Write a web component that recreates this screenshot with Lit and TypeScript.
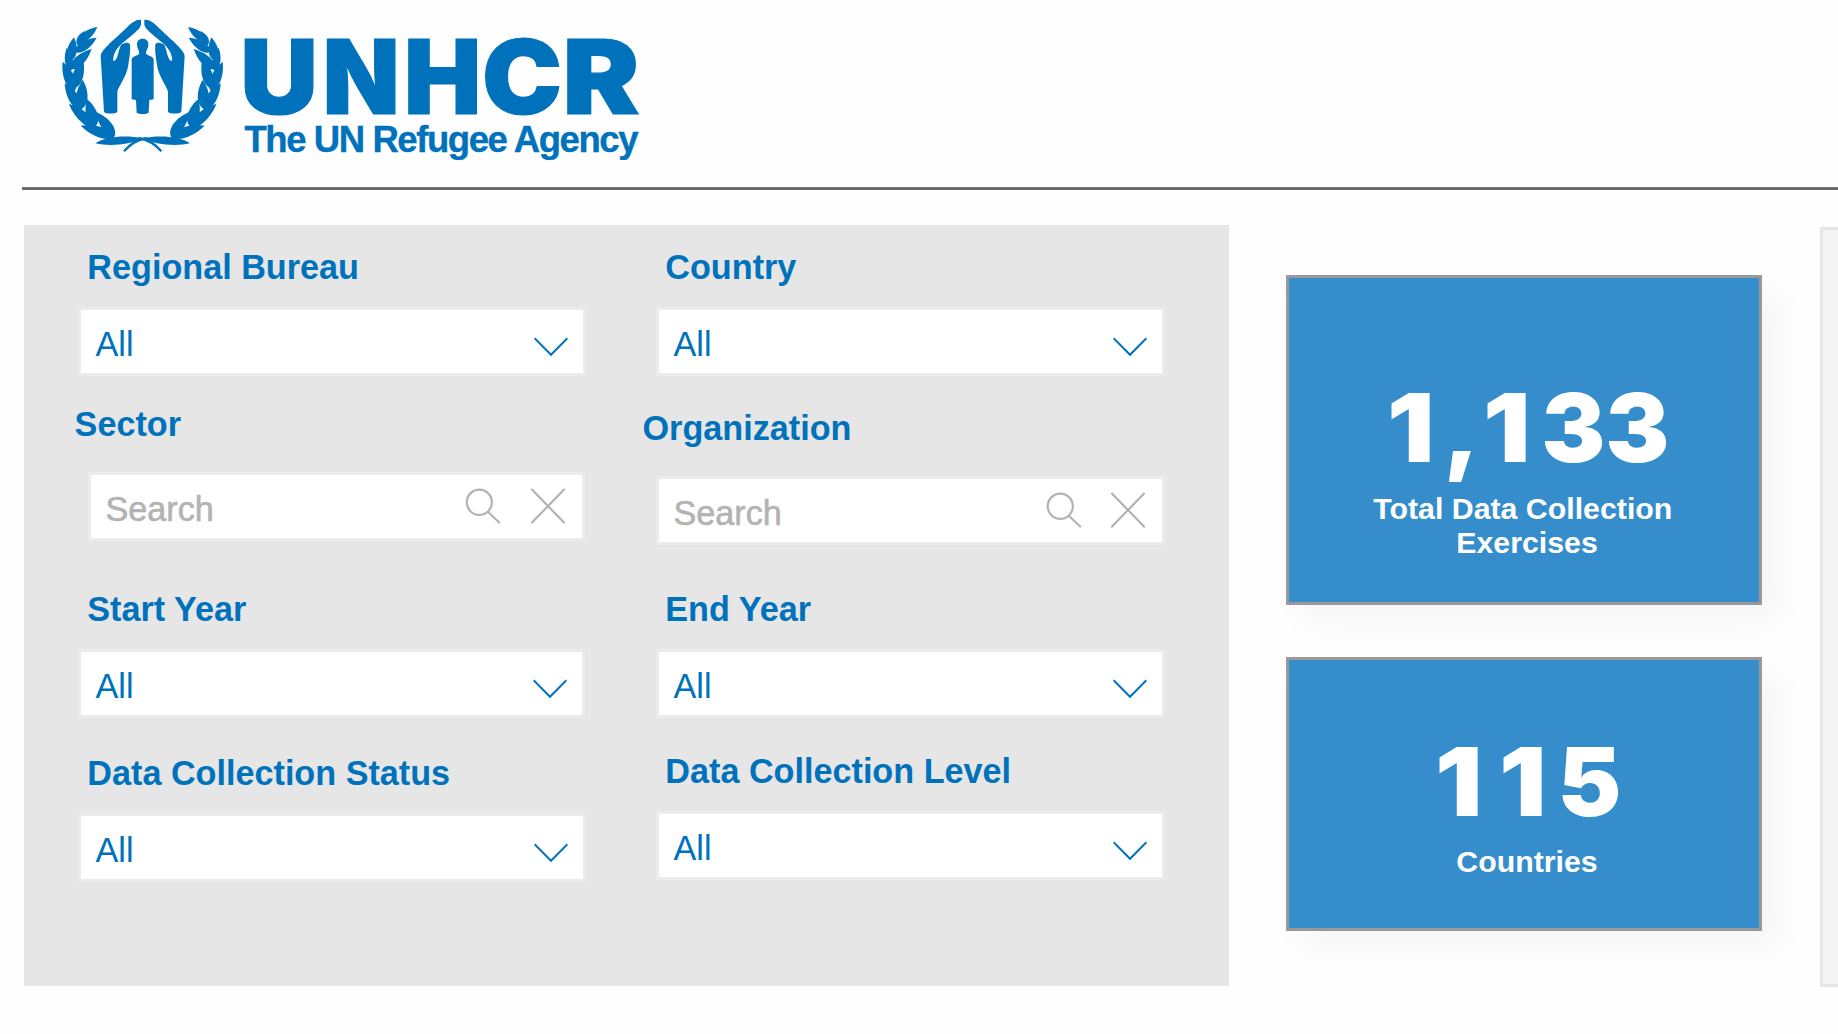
import { LitElement, html, svg, css } from "lit";
import { customElement, property } from "lit/decorators.js";
import { classMap } from "lit/directives/class-map.js";

type Leaf = [number, number, number, number, number];

// Laurel leaves: tip x/y, base x/y, half width
const LEAVES: Leaf[] = [
  [142, 51, 86, 95, 10],
  [104, 63, 83, 106, 9],
  [140, 83, 74, 126, 11],
  [72, 82, 61, 153, 12],
  [125, 117, 60, 178, 12],
  [50, 113, 62, 182, 10],
  [98, 143, 74, 234, 13],
  [38, 155, 74, 243, 13],
  [98, 209, 94, 297, 14],
  [44, 220, 94, 301, 13],
  [111, 267, 136, 350, 14],
  [57, 282, 135, 352, 13],
  [138, 306, 194, 378, 13],
  [92, 347, 194, 381, 13],
];

const leafPath = ([tx, ty, bx, by, w]: Leaf) => {
  const dx = bx - tx;
  const dy = by - ty;
  const len = Math.hypot(dx, dy);
  const nx = (-dy / len) * w * 1.7;
  const ny = (dx / len) * w * 1.7;
  const p = (t: number, s: number) =>
    `${(tx + dx * t + nx * s).toFixed(1)} ${(ty + dy * t + ny * s).toFixed(1)}`;
  return `M${tx} ${ty}C${p(0.38, 0.9)} ${p(0.84, 1)} ${bx} ${by}C${p(0.84, -1)} ${p(0.38, -0.9)} ${tx} ${ty}Z`;
};

@customElement("brand-logo")
export class BrandLogo extends LitElement {
  static styles = css`
    :host { display: block; }
    .logo { display: block; width: 600px; height: 150px; fill: #0072bc; }
    .name { font: 900 103px Inter, Arial, sans-serif; stroke: #0072bc; stroke-width: 1.2px; }
    .tag { font: 700 36.5px "Liberation Sans", Arial, sans-serif; stroke: #0072bc; stroke-width: .4px; }
    .stem { fill: none; stroke: #0072bc; stroke-width: 7; }
  `;

  render() {
    const half = svg`
      <path d="M273 30C262 27 245 37 230 53C200 82 152 120 152 138L162 306C170 312 193 312 202 306L202 245C206 228 230 200 235 165C238 145 242 120 240 103C236 96 226 97 215 103C206 115 206 135 198 148C192 157 188 152 190 143C194 120 208 106 226 92C247 74 270 58 273 44Z"/>
      ${LEAVES.map((l) => svg`<path d=${leafPath(l)}/>`)}
      <path d="M136 400C165 380 225 374 279 385C240 404 180 410 136 400Z"/>
      <path class="stem" d="M222 424C240 402 258 390 290 384"/>`;
    // Letter, x origin, horizontal stretch
    const letters: [string, number, number][] = [
      ["U", 240.2, 1.045],
      ["N", 322.8, 0.97],
      ["H", 404, 1],
      ["C", 482, 1.04],
      ["R", 562.5, 1.12],
    ];
    return html`
      <svg class="logo" viewBox="50 10 600 150" role="img" aria-label="UNHCR">
        <g transform="translate(50 10) scale(.33333)">
          ${half}
          <g transform="translate(556 0) scale(-1 1)">${half}</g>
          <path d="M278 86C290 86 296 94 295 106C294 117 288 122 288 130C290 138 311 138 311 150L311 268L298 270L296 308C290 313 266 313 260 308L258 270L245 268L245 150C245 138 266 138 268 130C268 122 262 117 261 106C260 94 266 86 278 86Z"/>
        </g>
        ${letters.map(([c, x, s]) => svg`<text class="name" transform=${`translate(${x} 113.5) scale(${s} 1)`}>${c}</text>`)}
        <text class="tag" x="244.5" y="151.5" textLength="394" lengthAdjust="spacing">The UN Refugee Agency</text>
      </svg>`;
  }
}

@customElement("filter-field")
export class FilterField extends LitElement {
  @property() label = "";
  @property() kind: "select" | "search" = "select";

  static styles = css`
    :host { display: block; color: #0072bc; font: 34.2px/40px "Liberation Sans", Arial, sans-serif; }
    .label { font-weight: 700; white-space: nowrap; margin-left: var(--label-x, 9.3px); height: 40px; }
    .box {
      box-sizing: border-box; height: 69px; display: flex; background: #fff;
      border: 3px solid #ebebeb; padding: 14px 14.6px 0 14.5px;
      margin: var(--box-gap, 20px) var(--box-end, 0) 0 var(--box-start, 0);
    }
    .value { flex: 1; }
    .chevron { width: 34px; height: 20px; margin: 12.5px 0 0; fill: none; stroke: #0072bc; stroke-width: 2; }
    .search { padding: 13px 15.6px 0 14.5px; color: #b3b3b3; }
    .search .value { -webkit-text-stroke: .6px #b3b3b3; padding-top: 1px; }
    .glass, .clear { width: 36px; height: 36px; fill: none; stroke: #b3b3b3; stroke-width: 2.2; stroke-linecap: round; }
    .glass { margin-right: var(--icon-gap, 29px); }
  `;

  render() {
    return html`
      <div class="label">${this.label}</div>
      ${this.kind === "select"
        ? html`<div class="box">
            <span class="value">All</span>
            <svg class="chevron" viewBox="0 0 34 20"><path d="M.6 1.3L17 17.8L33.4 1.3"/></svg>
          </div>`
        : html`<div class="box search">
            <span class="value">Search</span>
            <svg class="glass" viewBox="0 0 36 36"><circle cx="14.3" cy="14.3" r="12.6"/><path d="M22.8 23.8L34.2 34.5"/></svg>
            <svg class="clear" viewBox="0 0 36 36"><path d="M2 1.6L34 34.6M34 1.6L2 34.6"/></svg>
          </div>`}
    `;
  }
}

@customElement("stat-card")
export class StatCard extends LitElement {
  @property() value = "";
  @property({ type: Array }) lines: string[] = [];

  static styles = css`
    :host {
      box-sizing: border-box; display: flex; flex-direction: column; align-items: center;
      border: 3px solid #999; background: #358ecb; color: #fff; padding-left: 6px;
      box-shadow: 16px 16px 34px rgba(0, 0, 0, .04);
      font: 700 30.3px/34px "Liberation Sans", Arial, sans-serif;
    }
    .value { display: flex; padding-right: 3px; font: 900 95.5px/100px Inter, Arial, sans-serif; }
    .digit { width: 64px; display: flex; justify-content: center; }
    .one { box-sizing: border-box; padding-right: 6px; transform: scaleX(1.1); }
    .comma { width: 32px; }
    .caption { margin-top: var(--caption-gap, 0); text-align: center; }
    .line { white-space: pre; }
  `;

  render() {
    return html`
      <div class="value">
        ${[...this.value].map(
          (c) => html`<span class=${classMap({ digit: true, one: c === "1", comma: c === "," })}>${c}</span>`,
        )}
      </div>
      <div class="caption">${this.lines.map((l) => html`<div class="line">${l}</div>`)}</div>
    `;
  }
}

@customElement("app-root")
export class AppRoot extends LitElement {
  static styles = css`
    :host { display: block; width: 1838px; height: 1034px; overflow: hidden; background: #fefefe; }
    .header { height: 187px; box-sizing: border-box; padding: 10px 0 0 50px; }
    .rule { height: 2px; margin-left: 22px; background: #666; border-top: 1px solid #7a7a7a; }
    .main { display: flex; align-items: flex-start; padding: 35px 0 0 24px; }
    .filters {
      flex: none; box-sizing: border-box; width: 1205px; height: 761px; background: #e6e6e6;
      display: flex; gap: 70px; padding: 22px 0 0 54px;
    }
    .left { width: 508px; }
    .right { width: 508.5px; }
    .sector { --label-x: -3.4px; --box-gap: 28px; --box-start: 10px; --box-end: 1px; margin-top: 28px; }
    .organization { --label-x: -13.5px; --box-gap: 28px; --icon-gap: 27.5px; margin-top: 32px; }
    .start { --box-end: 1px; margin-top: 48px; }
    .end { margin-top: 44px; }
    .status { margin-top: 35px; }
    .level { margin-top: 33px; }
    .stats { width: 476px; flex: none; margin: 50px 0 0 57px; display: flex; flex-direction: column; gap: 52px; }
    .total { height: 330px; padding-top: 98.5px; --caption-gap: 15px; }
    .countries { height: 274px; padding-top: 70.5px; --caption-gap: 14px; }
    .detail { flex: none; box-sizing: border-box; width: 60px; height: 760px; margin: 2px 0 0 58px; border: 3px solid #e6e6e6; background: #f4f4f4; }
  `;

  render() {
    return html`
      <div class="header"><brand-logo></brand-logo></div>
      <div class="rule"></div>
      <div class="main">
        <div class="filters">
          <div class="left">
            <filter-field label="Regional Bureau"></filter-field>
            <filter-field class="sector" label="Sector" kind="search"></filter-field>
            <filter-field class="start" label="Start Year"></filter-field>
            <filter-field class="status" label="Data Collection Status"></filter-field>
          </div>
          <div class="right">
            <filter-field label="Country"></filter-field>
            <filter-field class="organization" label="Organization" kind="search"></filter-field>
            <filter-field class="end" label="End Year"></filter-field>
            <filter-field class="level" label="Data Collection Level"></filter-field>
          </div>
        </div>
        <div class="stats">
          <stat-card class="total" value="1,133" .lines=${["Total Data Collection ", "Exercises"]}></stat-card>
          <stat-card class="countries" value="115" .lines=${["Countries"]}></stat-card>
        </div>
        <div class="detail"></div>
      </div>
    `;
  }
}
